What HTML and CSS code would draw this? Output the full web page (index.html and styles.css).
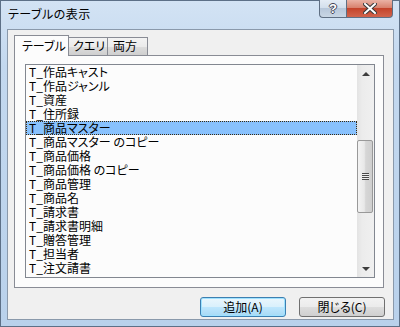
FILE: index.html
```html
<!DOCTYPE html>
<html lang="ja">

<head>
    <meta charset="UTF-8">
    <title>テーブルの表示</title>
    <link rel="stylesheet" href="styles.css">
</head>

<body>
    <div class="window">
        <div class="titlebar">
            <div class="title">テーブルの表示</div>
            <div class="caption-buttons">
                <div class="cap-btn cap-help">?</div>
                <div class="cap-btn cap-close">
                    <svg width="14" height="11" viewBox="0 0 14 11">
                        <path d="M2 1 L12 10 M12 1 L2 10" stroke="#3a3a3a" stroke-width="4" stroke-linecap="square" />
                        <path d="M2 1 L12 10 M12 1 L2 10" stroke="#ffffff" stroke-width="2" stroke-linecap="square" />
                    </svg>
                </div>
            </div>
        </div>

        <div class="client">
            <div class="tabs">
                <div class="tab active">テーブル</div>
                <div class="tab">クエリ</div>
                <div class="tab">両方</div>
            </div>

            <div class="pane">
                <div class="listbox">
                    <ul class="items">
                        <li>T_作品キャスト</li>
                        <li>T_作品ジャンル</li>
                        <li>T_資産</li>
                        <li>T_住所録</li>
                        <li class="selected">T_商品マスター</li>
                        <li>T_商品マスター のコピー</li>
                        <li>T_商品価格</li>
                        <li>T_商品価格 のコピー</li>
                        <li>T_商品管理</li>
                        <li>T_商品名</li>
                        <li>T_請求書</li>
                        <li>T_請求書明細</li>
                        <li>T_贈答管理</li>
                        <li>T_担当者</li>
                        <li>T_注文請書</li>
                    </ul>
                    <div class="scrollbar">
                        <div class="sb-btn"><span class="arrow-up"></span></div>
                        <div class="sb-track">
                            <div class="thumb">
                                <span class="grip"></span>
                            </div>
                        </div>
                        <div class="sb-btn"><span class="arrow-down"></span></div>
                    </div>
                </div>
            </div>

            <div class="actions">
                <button class="btn default">追加(A)</button>
                <button class="btn">閉じる(C)</button>
            </div>
        </div>
    </div>
</body>

</html>
```

FILE: styles.css
```css
html,
body {
    margin: 0;
    padding: 0;
    background: #ffffff;
    font-family: "Noto Sans CJK JP", "Noto Sans", sans-serif;
    font-size: 12px;
    color: #000000;
}

.window {
    box-sizing: border-box;
    width: 400px;
    height: 327px;
    border: 1px solid #5d7087;
    background: linear-gradient(180deg, #d3e3f4 0%, #c3d8ef 20%, #b9d1eb 100%);
    display: flex;
    flex-direction: column;
    padding: 0 5px 6px 6px;
}

/* Title bar */
.titlebar {
    height: 28px;
    display: flex;
    align-items: flex-start;
}

.title {
    padding: 5px 0 0 1px;
    line-height: 16px;
    font-feature-settings: "palt";
    letter-spacing: 0.5px;
}

.caption-buttons {
    margin-left: auto;
    margin-top: -1px;
    margin-right: 1px;
    display: flex;
}

.cap-btn {
    height: 18px;
    box-sizing: border-box;
    display: flex;
    align-items: center;
    justify-content: center;
    border: 1px solid #5f6f83;
    border-top: none;
}

.cap-help {
    width: 27px;
    border-right: none;
    border-radius: 0 0 0 4px;
    background: linear-gradient(180deg, #e4ecf5 0%, #d3dfec 45%, #b7c7da 50%, #c9d6e4 100%);
    color: #ffffff;
    font-family: "Liberation Sans", sans-serif;
    font-weight: bold;
    font-size: 13px;
    text-shadow: 1px 0 0 #445, -1px 0 0 #445, 0 1px 0 #445, 0 -1px 0 #445;
}

.cap-close {
    width: 47px;
    border-radius: 0 0 4px 0;
    background: linear-gradient(180deg, #eab3a5 0%, #d8826e 45%, #c4442b 50%, #d1644c 100%);
}

/* Client area */
.client {
    flex: 1;
    border: 1px solid #8a99ab;
    background: #f0f0f0;
    padding: 5px 8px 0 6px;
    display: flex;
    flex-direction: column;
}

.tabs {
    display: flex;
    align-items: flex-end;
    height: 21px;
    position: relative;
    z-index: 1;
}

.tab {
    box-sizing: border-box;
    height: 18px;
    margin-bottom: 1px;
    padding: 0 0 0 4px;
    border: 1px solid #898c95;
    border-bottom: none;
    margin-left: -1px;
    background: linear-gradient(180deg, #f3f3f3 0%, #ebebeb 50%, #dddddd 51%, #cfcfcf 100%);
    line-height: 16px;
    white-space: nowrap;
    overflow: hidden;
    font-feature-settings: "palt";
}

.tab.active {
    height: 21px;
    width: 55px;
    padding-left: 7px;
    margin-left: 0;
    margin-bottom: 0;
    background: #fcfcfc;
    line-height: 20px;
}

.tab:nth-child(2) {
    width: 40px;
}

.tab:nth-child(3) {
    width: 41px;
    padding-left: 5px;
}

.pane {
    box-sizing: border-box;
    width: 370px;
    height: 233px;
    margin-top: -1px;
    border: 1px solid #898c95;
    background: #fcfcfc;
    padding: 8px 8px 9px 10px;
}

/* List box */
.listbox {
    box-sizing: border-box;
    height: 214px;
    border: 1px solid #828790;
    background: #fcfcfc;
    display: flex;
}

.items {
    flex: 1;
    list-style: none;
    margin: 0;
    padding: 0;
    overflow: hidden;
}

.items li {
    box-sizing: border-box;
    height: 14px;
    line-height: 14px;
    padding-left: 3px;
    white-space: nowrap;
    font-feature-settings: "palt";
}

.items li.selected {
    background: #88c1fd;
    outline: 1px dotted #3a2a10;
    outline-offset: -1px;
}

/* Scroll bar */
.scrollbar {
    width: 17px;
    display: flex;
    flex-direction: column;
    background: linear-gradient(90deg, #e3e3e3 0%, #ececec 30%, #f0f0f0 100%);
}

.sb-btn {
    height: 17px;
    display: flex;
    align-items: center;
    justify-content: center;
}

.arrow-up {
    width: 0;
    height: 0;
    border-left: 4px solid transparent;
    border-right: 4px solid transparent;
    border-bottom: 4px solid #3d3d3d;
}

.arrow-down {
    width: 0;
    height: 0;
    border-left: 4px solid transparent;
    border-right: 4px solid transparent;
    border-top: 4px solid #3d3d3d;
}

.sb-track {
    flex: 1;
    padding-top: 58px;
}

.thumb {
    box-sizing: border-box;
    width: 16px;
    height: 73px;
    border: 1px solid #999999;
    border-radius: 2px;
    background: linear-gradient(90deg, #f3f3f3 0%, #e8e8e8 45%, #d6d6d6 55%, #cfcfcf 100%);
    display: flex;
    align-items: center;
    justify-content: center;
}

.grip {
    width: 7px;
    height: 7px;
    background: repeating-linear-gradient(180deg, #4a4a4a 0px, #4a4a4a 1px, #eeeeee 1px, #eeeeee 2px);
}

/* Buttons */
.actions {
    display: flex;
    justify-content: flex-end;
    gap: 13px;
    margin-top: 9px;
}

.btn {
    box-sizing: border-box;
    width: 86px;
    height: 20px;
    padding: 0;
    border: 1px solid #707070;
    border-radius: 3px;
    background: linear-gradient(180deg, #f2f2f2 0%, #ebebeb 50%, #dddddd 51%, #cfcfcf 100%);
    font-family: "Noto Sans CJK JP", "Noto Sans", sans-serif;
    font-size: 12px;
    line-height: 16px;
    color: #000000;
    font-feature-settings: "palt";
}

.btn.default {
    border-color: #3c7fb1;
    background: linear-gradient(180deg, #eaf6fd 0%, #d9f0fc 50%, #bee6fd 51%, #a7d9f5 100%);
    box-shadow: inset 0 0 0 1px #9fe2ff;
}
```
